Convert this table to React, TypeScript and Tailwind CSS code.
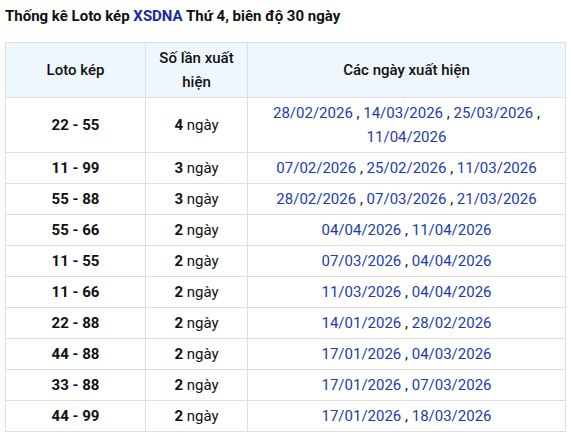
const rows = [
  { pair: '22 - 55', count: 4, dates: ['28/02/2026', '14/03/2026', '25/03/2026', '11/04/2026'] },
  { pair: '11 - 99', count: 3, dates: ['07/02/2026', '25/02/2026', '11/03/2026'] },
  { pair: '55 - 88', count: 3, dates: ['28/02/2026', '07/03/2026', '21/03/2026'] },
  { pair: '55 - 66', count: 2, dates: ['04/04/2026', '11/04/2026'] },
  { pair: '11 - 55', count: 2, dates: ['07/03/2026', '04/04/2026'] },
  { pair: '11 - 66', count: 2, dates: ['11/03/2026', '04/04/2026'] },
  { pair: '22 - 88', count: 2, dates: ['14/01/2026', '28/02/2026'] },
  { pair: '44 - 88', count: 2, dates: ['17/01/2026', '04/03/2026'] },
  { pair: '33 - 88', count: 2, dates: ['17/01/2026', '07/03/2026'] },
  { pair: '44 - 99', count: 2, dates: ['17/01/2026', '18/03/2026'] },
];

export default function App() {
  return (
    <div className="bg-white px-[5px] pt-[5px] font-['Roboto',sans-serif] text-[15px] text-[#111]">
      <h2 className="font-bold text-[15px] leading-[22px] mb-[15px]">
        Thống kê Loto kép <span className="text-[#1a2aa0]">XSDNA</span> Thứ 4, biên độ 30 ngày
      </h2>
      <table className="w-[561px] border-collapse table-fixed text-center">
        <colgroup>
          <col className="w-[140px]" />
          <col className="w-[102px]" />
          <col />
        </colgroup>
        <thead>
          <tr className="bg-[#eef6fe]">
            <th className="border border-[#dedede] py-[3px] px-2 font-medium leading-6">Loto kép</th>
            <th className="border border-[#dedede] py-[3px] px-2 font-medium leading-6">Số lần xuất hiện</th>
            <th className="border border-[#dedede] py-[3px] px-2 font-medium leading-6">Các ngày xuất hiện</th>
          </tr>
        </thead>
        <tbody>
          {rows.map((r) => (
            <tr key={r.pair}>
              <td className="border border-[#dedede] py-[3px] px-2 font-bold leading-6">{r.pair}</td>
              <td className="border border-[#dedede] py-[3px] px-2 leading-6">
                <span className="font-bold">{r.count}</span> ngày
              </td>
              <td className="border border-[#dedede] py-[3px] px-2 leading-6 text-[#1a3cb0]">
                {r.dates.map((d, i) => (
                  <span key={i}>
                    {d}
                    {i < r.dates.length - 1 && <span className="text-[#111]"> , </span>}
                  </span>
                ))}
              </td>
            </tr>
          ))}
        </tbody>
      </table>
    </div>
  );
}
